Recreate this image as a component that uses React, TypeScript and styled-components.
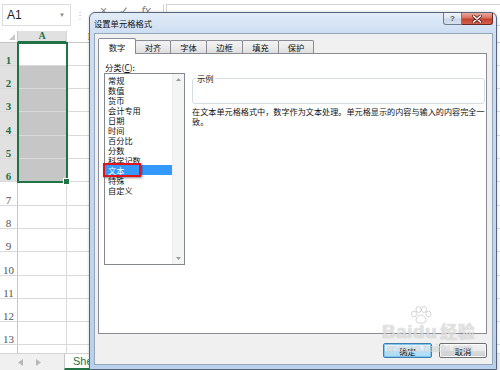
import React from 'react';
import styled, { createGlobalStyle } from 'styled-components';

const CJK = `"Noto Sans CJK SC", "Noto Sans", sans-serif`;
const UI = `"Liberation Sans", Arial, sans-serif`;
const GREEN = '#217346';

const GlobalStyle = createGlobalStyle`
  html, body { margin: 0; padding: 0; background: #fff; }
  #root { width: 500px; height: 370px; }
`;

const Screen = styled.div`
  position: relative;
  width: 500px;
  height: 370px;
  overflow: hidden;
  background: #fff;
  display: flex;
  flex-direction: column;
`;

/* ---------- formula bar ---------- */
const FormulaBar = styled.div`
  height: 31px;
  flex: none;
  box-sizing: border-box;
  padding-top: 4px;
  display: flex;
  align-items: flex-start;
`;
const NameBox = styled.div`
  width: 69px;
  height: 22px;
  margin-left: 2px;
  box-sizing: border-box;
  border: 1px solid #dcdcdc;
  padding: 0 5px 0 4px;
  display: flex;
  align-items: center;
  justify-content: space-between;
  font: 12px ${UI};
  color: #222;
`;
const Caret = styled.span`
  font-size: 6px;
  color: #888;
`;
const Separator = styled.div`
  width: 17px;
  height: 22px;
  display: flex;
  align-items: center;
  justify-content: center;
  color: #bbb;
  font: 10px ${UI};
`;
const FxButtons = styled.div`
  width: 76px;
  height: 22px;
  box-sizing: border-box;
  display: flex;
  align-items: flex-start;
  justify-content: space-around;
  padding: 0 6px;
  color: #888;
  font: 12px/14px ${UI};
  border-right: 1px solid #d4d4d4;
`;
const FxLabel = styled.span`
  font-style: italic;
`;
const FormulaInput = styled.div`
  flex: 1;
  height: 22px;
  margin-left: 2px;
  box-sizing: border-box;
  border: 1px solid #d4d4d4;
  border-right: none;
`;

/* ---------- sheet grid ---------- */
const Sheet = styled.div`
  position: relative;
  flex: 1;
  display: flex;
  flex-direction: column;
  overflow: hidden;
`;
const HeaderRow = styled.div`
  height: 12px;
  flex: none;
  display: flex;
`;
const Corner = styled.div`
  width: 18px;
  flex: none;
  box-sizing: border-box;
  border-right: 1px solid #c6c6c6;
  border-bottom: 1px solid #c6c6c6;
  display: flex;
  align-items: flex-end;
  justify-content: flex-end;
  padding: 0 2px 2px 0;
`;
const ColHeader = styled.div<{ $sel?: boolean }>`
  width: 49px;
  flex: none;
  box-sizing: border-box;
  border-right: 1px solid #d4d4d4;
  border-bottom: ${(p) => (p.$sel ? `2px solid ${GREEN}` : '1px solid #c6c6c6')};
  background: ${(p) => (p.$sel ? '#e1e1e1' : '#fff')};
  color: ${(p) => (p.$sel ? GREEN : '#444')};
  font: ${(p) => (p.$sel ? 'bold' : 'normal')} 10px "Liberation Serif", serif;
  display: flex;
  align-items: center;
  justify-content: center;
  line-height: 10px;
`;
const Body = styled.div`
  flex: 1;
  overflow: hidden;
`;
const Row = styled.div<{ $h: number }>`
  height: ${(p) => p.$h}px;
  display: flex;
`;
const RowHeader = styled.div<{ $sel?: boolean }>`
  width: 18px;
  flex: none;
  box-sizing: border-box;
  border-right: 1px solid #c6c6c6;
  border-bottom: 1px solid #dadada;
  background: ${(p) => (p.$sel ? '#e1e1e1' : '#fff')};
  color: ${(p) => (p.$sel ? GREEN : '#555')};
  font: ${(p) => (p.$sel ? 'bold' : 'normal')} 11px "Liberation Serif", serif;
  display: flex;
  align-items: flex-end;
  justify-content: center;
  line-height: 9px;
`;
const Cell = styled.div<{ $fill?: boolean }>`
  width: 49px;
  flex: none;
  box-sizing: border-box;
  border-right: 1px solid #dadada;
  border-bottom: 1px solid #dadada;
  background: ${(p) => (p.$fill ? '#c6c6c6' : '#fff')};
`;
const Selection = styled.div`
  position: absolute;
  left: 17px;
  top: 11px;
  width: 51px;
  height: 141px;
  box-sizing: border-box;
  border: 2px solid ${GREEN};
  pointer-events: none;
`;
const FillHandle = styled.div`
  position: absolute;
  right: -4px;
  bottom: -4px;
  width: 5px;
  height: 5px;
  background: ${GREEN};
  border: 1px solid #fff;
`;
const TabBar = styled.div`
  height: 17px;
  flex: none;
  box-sizing: border-box;
  border-top: 1px solid #d4d4d4;
  background: #f0f0f0;
  display: flex;
  align-items: stretch;
  padding-left: 16px;
`;
const NavArrow = styled.div`
  width: 9px;
  margin-right: 9px;
  display: flex;
  align-items: center;
  justify-content: center;
`;
const SheetTab = styled.div`
  margin-left: 12px;
  padding: 0 8px;
  background: #fff;
  border-left: 1px solid #c6c6c6;
  border-bottom: 2px solid ${GREEN};
  color: ${GREEN};
  font: 11px ${UI};
  display: flex;
  align-items: center;
`;

/* ---------- dialog ---------- */
const Dialog = styled.div`
  position: absolute;
  left: 89px;
  top: 12px;
  width: 408px;
  height: 358px;
  box-sizing: border-box;
  border: 1px solid #56657a;
  border-radius: 6px 6px 0 0;
  background: linear-gradient(180deg, #e2ecf8 0px, #cddef2 20px, #b9d0ec 100%);
  padding: 0 3px 4px 4px;
  display: flex;
  flex-direction: column;
  box-shadow: 0 0 3px rgba(0, 0, 0, 0.2);
`;
const TitleBar = styled.div`
  height: 20px;
  flex: none;
  display: flex;
  align-items: flex-start;
`;
const Title = styled.div`
  margin-top: 5px;
  font: 8.3px/10px ${CJK};
  color: #111;
`;
const CaptionButtons = styled.div`
  margin-left: auto;
  display: flex;
`;
const CaptionButton = styled.div<{ $close?: boolean }>`
  width: ${(p) => (p.$close ? 31 : 19)}px;
  height: 12px;
  box-sizing: border-box;
  border: 1px solid ${(p) => (p.$close ? '#6a2b24' : '#6c7b90')};
  border-top: none;
  border-left: ${(p) => (p.$close ? 'none' : '1px solid #6c7b90')};
  border-radius: ${(p) => (p.$close ? '0 0 3px 0' : '0 0 0 3px')};
  background: ${(p) =>
    p.$close
      ? 'linear-gradient(180deg, #e9a99c 0%, #d7715f 45%, #c2412f 55%, #d2614b 100%)'
      : 'linear-gradient(180deg, #f1f5fb 0%, #dde6f1 45%, #c9d6e6 55%, #d7e1ee 100%)'};
  display: flex;
  align-items: center;
  justify-content: center;
  color: #555;
  font: bold 8px ${UI};
`;
const Client = styled.div`
  flex: 1;
  box-sizing: border-box;
  border: 1px solid #97a7bb;
  background: #f0f0f0;
  padding: 4px 5px 6px 3px;
  display: flex;
  flex-direction: column;
`;
const TabStrip = styled.div`
  height: 15px;
  flex: none;
  display: flex;
  align-items: flex-end;
  position: relative;
  z-index: 1;
`;
const Tab = styled.div<{ $active?: boolean; $w: number }>`
  width: ${(p) => p.$w}px;
  height: ${(p) => (p.$active ? 16 : 13)}px;
  margin-bottom: ${(p) => (p.$active ? -1 : 0)}px;
  margin-left: -1px;
  &:first-child { margin-left: 0; }
  box-sizing: border-box;
  border: 1px solid #898c95;
  border-bottom: none;
  border-radius: 2px 2px 0 0;
  background: ${(p) => (p.$active ? '#fff' : 'linear-gradient(180deg, #f3f3f3 0%, #ebebeb 50%, #dedede 100%)')};
  position: relative;
  z-index: ${(p) => (p.$active ? 2 : 1)};
  display: flex;
  align-items: center;
  justify-content: center;
  font: 8.3px/10px ${CJK};
  color: #111;
`;
const Panel = styled.div`
  flex: 1;
  box-sizing: border-box;
  border: 1px solid #898c95;
  background: #fff;
  padding: 7px 4px 0 5px;
  display: flex;
  gap: 7px;
  align-items: flex-start;
`;
const LeftCol = styled.div`
  width: 81px;
  flex: none;
  display: flex;
  flex-direction: column;
`;
const Label = styled.div`
  height: 12px;
  padding-left: 1px;
  font: 8.3px/12px ${CJK};
  color: #111;
  u { text-decoration: underline; }
`;
const ListBox = styled.div`
  height: 192px;
  box-sizing: border-box;
  border: 1px solid #828790;
  display: flex;
`;
const Items = styled.div`
  flex: 1;
  padding-top: 1px;
`;
const Item = styled.div<{ $sel?: boolean }>`
  position: relative;
  height: 10px;
  padding-left: 3px;
  font: 8.2px/10px ${CJK};
  color: ${(p) => (p.$sel ? '#fff' : '#111')};
  background: ${(p) => (p.$sel ? '#3399ff' : 'transparent')};
  white-space: nowrap;
`;
const Highlight = styled.span`
  position: absolute;
  left: -2px;
  top: -2px;
  width: 38px;
  height: 14px;
  box-sizing: border-box;
  border: 2px solid #e3121b;
  box-shadow: 1px 1px 2px rgba(0, 0, 0, 0.45);
`;
const ScrollBar = styled.div`
  width: 11px;
  flex: none;
  background: #f4f4f4;
  border-left: 1px solid #ececec;
  display: flex;
  flex-direction: column;
  justify-content: space-between;
`;
const ScrollArrow = styled.div`
  height: 11px;
  display: flex;
  align-items: center;
  justify-content: center;
`;
const RightCol = styled.div`
  flex: 1;
  display: flex;
  flex-direction: column;
  padding-top: 12px;
`;
const GroupBox = styled.fieldset`
  margin: 0;
  padding: 0;
  border: 1px solid #d5dde5;
  border-radius: 3px;
  legend {
    margin-left: 3px;
    padding: 0 1px;
    font: 8.3px/10px ${CJK};
    color: #1a1a1a;
  }
`;
const GroupContent = styled.div`
  height: 20px;
`;
const Description = styled.div`
  margin-top: 3px;
  font: 8.15px/10px ${CJK};
  color: #111;
  white-space: nowrap;
`;
const Footer = styled.div`
  height: 15px;
  flex: none;
  margin-top: 9px;
  display: flex;
  justify-content: flex-end;
  gap: 7px;
`;
const Button = styled.div<{ $default?: boolean; $w: number }>`
  width: ${(p) => p.$w}px;
  box-sizing: border-box;
  border: 1px solid ${(p) => (p.$default ? '#3c7fb1' : '#707070')};
  border-radius: 2px;
  background: ${(p) =>
    p.$default
      ? 'linear-gradient(180deg, #eaf6fd 0%, #d9f0fc 50%, #bee6fd 51%, #a7d9f5 100%)'
      : 'linear-gradient(180deg, #f2f2f2 0%, #ebebeb 50%, #dddddd 51%, #cfcfcf 100%)'};
  box-shadow: ${(p) => (p.$default ? 'inset 0 0 0 1px #7ec5f0' : 'inset 0 0 0 1px #fcfcfc')};
  display: flex;
  align-items: center;
  justify-content: center;
  font: 8.3px/10px ${CJK};
  color: #111;
`;

/* ---------- watermark ---------- */
const Watermark = styled.div`
  position: absolute;
  left: 382px;
  top: 306px;
  width: 95px;
  display: flex;
  flex-direction: column;
  align-items: flex-start;
  pointer-events: none;
  color: rgba(255, 255, 255, 0.6);
  text-shadow: 0 0 1px rgba(110, 110, 110, 0.3), 0 0 1px rgba(110, 110, 110, 0.3);
`;
const Paw = styled.svg`
  margin-left: 28px;
  margin-bottom: -3px;
`;
const Brand = styled.div`
  font: bold 19px/19px ${UI};
  letter-spacing: 0.5px;
  white-space: nowrap;
  span { font: bold 17px/19px ${CJK}; margin-left: 3px; }
`;
const Domain = styled.div`
  margin-top: 2px;
  margin-left: 5px;
  font: 10px/11px ${UI};
  letter-spacing: 0.3px;
  white-space: nowrap;
`;

const rowHeights = [23, 23, 23, 24, 23, 23, 24, 23, 23, 24, 23, 23, 23, 12];
const colCount = 10;
const items = ['常规', '数值', '货币', '会计专用', '日期', '时间', '百分比', '分数', '科学记数', '文本', '特殊', '自定义'];
const tabs = [
  { label: '数字', w: 38, active: true },
  { label: '对齐', w: 36 },
  { label: '字体', w: 37 },
  { label: '边框', w: 37 },
  { label: '填充', w: 37 },
  { label: '保护', w: 36 },
];
const letters = 'ABCDEFGHIJ';

export default function App() {
  return (
    <>
      <GlobalStyle />
      <Screen>
        <FormulaBar>
          <NameBox>
            <span>A1</span>
            <Caret>▼</Caret>
          </NameBox>
          <Separator>⋮</Separator>
          <FxButtons>
            <span>×</span>
            <span>✓</span>
            <FxLabel>fx</FxLabel>
          </FxButtons>
          <FormulaInput />
        </FormulaBar>

        <Sheet>
          <HeaderRow>
            <Corner>
              <svg width="6" height="6" viewBox="0 0 6 6">
                <polygon points="6,0 6,6 0,6" fill="#c8c8c8" />
              </svg>
            </Corner>
            {Array.from({ length: colCount }).map((_, i) => (
              <ColHeader key={i} $sel={i === 0}>
                {letters[i]}
              </ColHeader>
            ))}
          </HeaderRow>
          <Body>
            {rowHeights.map((h, r) => (
              <Row key={r} $h={h}>
                <RowHeader $sel={r < 6}>{r < 13 ? r + 1 : ''}</RowHeader>
                {Array.from({ length: colCount }).map((_, c) => (
                  <Cell key={c} $fill={c === 0 && r >= 1 && r < 6} />
                ))}
              </Row>
            ))}
          </Body>
          <Selection>
            <FillHandle />
          </Selection>
          <TabBar>
            <NavArrow>
              <svg width="5" height="7" viewBox="0 0 5 7">
                <polygon points="5,0 5,7 0,3.5" fill="#b8b8b8" />
              </svg>
            </NavArrow>
            <NavArrow>
              <svg width="5" height="7" viewBox="0 0 5 7">
                <polygon points="0,0 0,7 5,3.5" fill="#b8b8b8" />
              </svg>
            </NavArrow>
            <SheetTab>Sheet1</SheetTab>
          </TabBar>
        </Sheet>

        <Dialog>
          <TitleBar>
            <Title>设置单元格格式</Title>
            <CaptionButtons>
              <CaptionButton>?</CaptionButton>
              <CaptionButton $close>
                <svg width="10" height="8" viewBox="0 0 10 8">
                  <path d="M1.5 1 L8.5 7 M8.5 1 L1.5 7" stroke="#5a2019" strokeWidth="3" strokeLinecap="round" />
                  <path d="M1.5 1 L8.5 7 M8.5 1 L1.5 7" stroke="#fff" strokeWidth="1.6" strokeLinecap="round" />
                </svg>
              </CaptionButton>
            </CaptionButtons>
          </TitleBar>
          <Client>
            <TabStrip>
              {tabs.map((t) => (
                <Tab key={t.label} $active={t.active} $w={t.w}>
                  {t.label}
                </Tab>
              ))}
            </TabStrip>
            <Panel>
              <LeftCol>
                <Label>
                  分类(<u>C</u>):
                </Label>
                <ListBox>
                  <Items>
                    {items.map((it) => (
                      <Item key={it} $sel={it === '文本'}>
                        {it}
                        {it === '文本' && <Highlight />}
                      </Item>
                    ))}
                  </Items>
                  <ScrollBar>
                    <ScrollArrow>
                      <svg width="5" height="3" viewBox="0 0 5 3">
                        <polygon points="0,3 5,3 2.5,0" fill="#9a9a9a" />
                      </svg>
                    </ScrollArrow>
                    <ScrollArrow>
                      <svg width="5" height="3" viewBox="0 0 5 3">
                        <polygon points="0,0 5,0 2.5,3" fill="#9a9a9a" />
                      </svg>
                    </ScrollArrow>
                  </ScrollBar>
                </ListBox>
              </LeftCol>
              <RightCol>
                <GroupBox>
                  <legend>示例</legend>
                  <GroupContent />
                </GroupBox>
                <Description>
                  在文本单元格格式中，数字作为文本处理。单元格显示的内容与输入的内容完全一
                  <br />
                  致。
                </Description>
              </RightCol>
            </Panel>
            <Footer>
              <Button $default $w={49}>
                确定
              </Button>
              <Button $w={48}>取消</Button>
            </Footer>
          </Client>
        </Dialog>

        <Watermark>
          <Paw width="22" height="18" viewBox="0 0 22 18">
            <g fill="none" stroke="rgba(120,120,120,0.3)" strokeWidth="1">
              <ellipse cx="4" cy="8" rx="2.5" ry="3" />
              <ellipse cx="8.5" cy="3.5" rx="2.5" ry="3" />
              <ellipse cx="14" cy="3.5" rx="2.5" ry="3" />
              <ellipse cx="18.5" cy="8" rx="2.5" ry="3" />
              <path d="M11 9 C7 9 5 14 6.5 16 C8 17.5 14 17.5 15.5 16 C17 14 15 9 11 9 Z" />
            </g>
          </Paw>
          <Brand>
            Baidu<span>经验</span>
          </Brand>
          <Domain>jingyan.baidu.com</Domain>
        </Watermark>
      </Screen>
    </>
  );
}
